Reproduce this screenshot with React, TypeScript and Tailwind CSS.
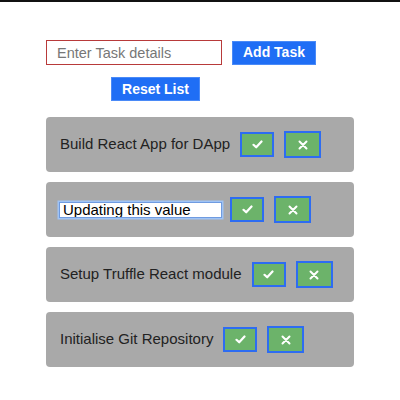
import React from "react";

const font = { fontFamily: '"Liberation Sans", Arial, sans-serif' };

function Check() {
  return (
    <svg width="11" height="9" viewBox="0 0 11 9" fill="none">
      <path d="M1.5 4.8 L4.2 7.3 L9.5 1.5" stroke="white" strokeWidth="2.2" strokeLinecap="round" strokeLinejoin="round" />
    </svg>
  );
}

function Cross() {
  return (
    <svg width="10" height="10" viewBox="0 0 10 10" fill="none">
      <path d="M1.5 1.5 L8.5 8.5 M8.5 1.5 L1.5 8.5" stroke="white" strokeWidth="2" strokeLinecap="round" />
    </svg>
  );
}

function Actions() {
  return (
    <>
      <button className="w-[34px] h-[25px] border-2 border-[#2d6cf2] bg-[#6cb36a] flex items-center justify-center shrink-0">
        <Check />
      </button>
      <button className="w-[37px] h-[27px] border-2 border-[#2d6cf2] bg-[#6cb36a] flex items-center justify-center shrink-0">
        <Cross />
      </button>
    </>
  );
}

export default function App() {
  const tasks = [
    { text: "Build React App for DApp" },
    { text: "Updating this value", editing: true },
    { text: "Setup Truffle React module" },
    { text: "Initialise Git Repository" },
  ];
  return (
    <div className="w-[400px] h-[400px] bg-white border-t-2 border-[#111]" style={font}>
      <div className="w-[308px] mx-auto pt-[38px]">
        <div className="flex items-center gap-[10px]">
          <input
            className="w-[176px] h-[25px] border-[1.5px] border-[#b83a3a] px-[10px] text-[14.5px] text-[#333] placeholder:text-[#777] outline-none bg-white"
            placeholder="Enter Task details"
          />
          <button className="w-[84px] h-[24px] bg-[#1f6ef5] border border-[#4a8af7] text-white font-bold text-[14px] flex items-center justify-center">
            Add Task
          </button>
        </div>
        <button className="mt-[12px] ml-[65px] w-[89px] h-[24px] bg-[#1f6ef5] border border-[#4a8af7] text-white font-bold text-[14px] flex items-center justify-center">
          Reset List
        </button>
        <div className="mt-[16px] flex flex-col gap-[10px]">
          {tasks.map((t, i) => (
            <div key={i} className="h-[55px] rounded-[4px] bg-[#a9a9a9] flex items-center pl-[14px] gap-[10px]">
              {t.editing ? (
                <input
                  className="w-[163px] h-[16px] -ml-px mr-[-2px] bg-white border border-[#6f9be0] shadow-[0_0_0_1.5px_#9fc3f5] text-[15px] text-black px-[3px] outline-none leading-none"
                  defaultValue={t.text}
                />
              ) : (
                <span className="text-[15px] text-[#222]">{t.text}</span>
              )}
              <Actions />
            </div>
          ))}
        </div>
      </div>
    </div>
  );
}
